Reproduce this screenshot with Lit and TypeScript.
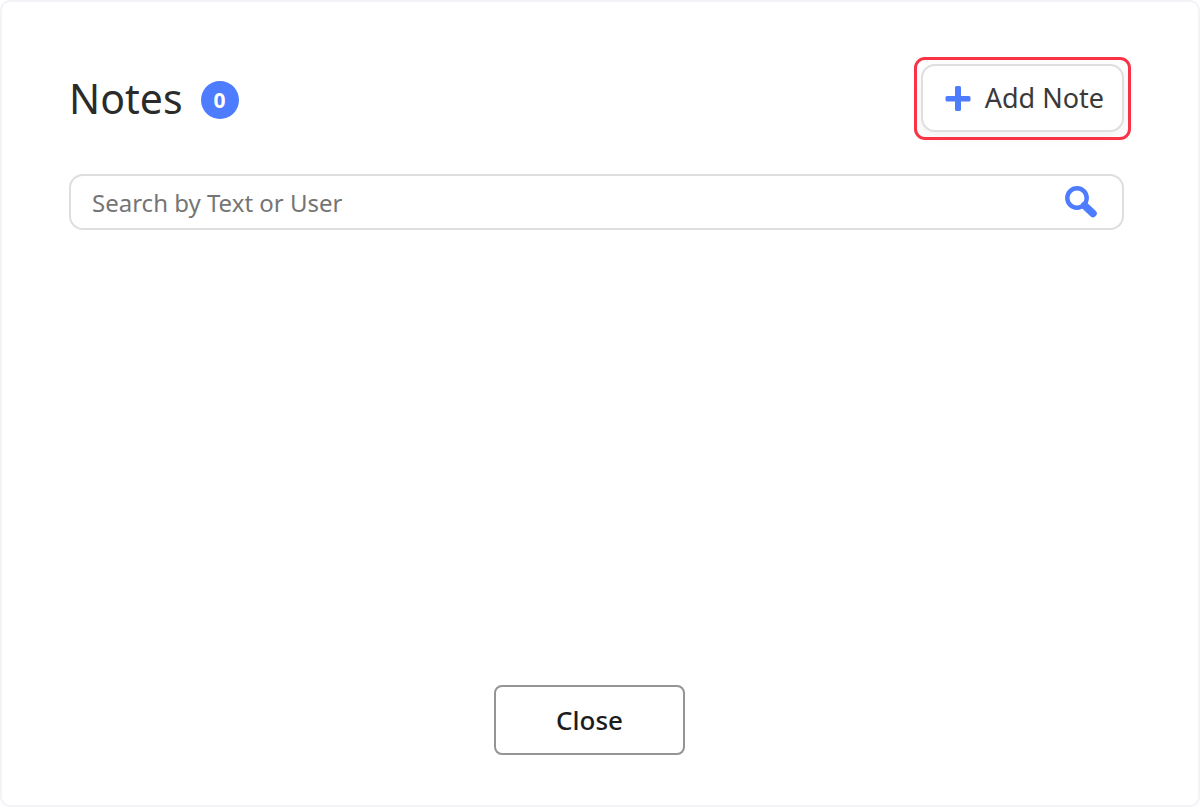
import { LitElement, html, css } from "lit";
import { customElement, property, state } from "lit/decorators.js";

@customElement("app-root")
export class AppRoot extends LitElement {
  @property({ type: Number }) count = 0;
  @state() private query = "";

  static styles = css`
    :host {
      display: block;
      font-family: "Noto Sans", "Open Sans", sans-serif;
      color: #2b2b2b;
    }
    * {
      box-sizing: border-box;
    }
    .panel {
      display: flex;
      flex-direction: column;
      min-height: 100vh;
      padding: 62px 74px 50px 67px;
      border: 2px solid #f2f2f7;
      border-radius: 10px;
      background: #fff;
    }
    .header {
      display: flex;
      align-items: center;
      justify-content: space-between;
      margin-bottom: 42px;
    }
    .heading {
      display: flex;
      align-items: center;
      gap: 18px;
    }
    h1 {
      margin: 0;
      font-size: 41px;
      line-height: 56px;
      font-weight: 400;
    }
    .badge {
      display: grid;
      place-items: center;
      width: 38px;
      height: 38px;
      margin-top: 4px;
      border-radius: 50%;
      background: #4d7cfe;
      color: #fff;
      font-size: 21px;
      line-height: 24px;
      font-weight: 700;
    }
    button {
      font-family: inherit;
      cursor: pointer;
      background: #fff;
    }
    .add {
      position: relative;
      display: flex;
      align-items: center;
      gap: 13px;
      height: 68px;
      padding: 0 18px 0 21px;
      border: 2px solid #dfdfdf;
      border-radius: 14px;
      color: #3a3a3a;
      font-size: 27px;
      line-height: 36px;
      box-shadow: 0 4px 14px rgba(0, 0, 0, 0.06);
    }
    .add::after {
      content: "";
      position: absolute;
      inset: -9px -9px -10px;
      border: 3px solid #fa3246;
      border-radius: 11px;
      pointer-events: none;
    }
    .add svg,
    .search svg {
      display: block;
      flex: none;
      fill: #4d7cfe;
    }
    .search {
      display: flex;
      align-items: center;
      height: 56px;
      padding: 0 24px 0 21px;
      border: 2px solid #dedede;
      border-radius: 14px;
    }
    .search input {
      flex: 1;
      min-width: 0;
      height: 40px;
      padding: 0;
      border: 0;
      outline: 0;
      background: none;
      font-family: inherit;
      font-size: 24px;
      color: #2b2b2b;
    }
    .search input::placeholder {
      color: #757575;
      opacity: 1;
    }
    .notes {
      flex: 1;
    }
    .footer {
      display: flex;
      justify-content: center;
      padding-right: 14px;
    }
    .close {
      width: 191px;
      height: 70px;
      border: 2px solid #949494;
      border-radius: 8px;
      color: #1c1c1c;
      font-size: 26px;
      line-height: 36px;
      font-weight: 500;
    }
  `;

  render() {
    return html`
      <main class="panel">
        <header class="header">
          <div class="heading">
            <h1>Notes</h1>
            <span class="badge">${this.count}</span>
          </div>
          <button class="add" type="button">
            <svg width="28" height="28" viewBox="0 0 28 28" aria-hidden="true">
              <path d="M12.500 2h3a1.500 1.500 0 0 1 1.500 1.500V12h8a1.500 1.500 0 0 1 1.500 1.500v2.500a1.500 1.500 0 0 1-1.500 1.500H17v8a1.500 1.500 0 0 1-1.500 1.500h-3A1.500 1.500 0 0 1 11 25.500v-8H3A1.500 1.500 0 0 1 1.500 16v-2.500A1.500 1.500 0 0 1 3 12h8V3.500A1.500 1.500 0 0 1 12.500 2z" />
            </svg>
            Add Note
          </button>
        </header>
        <div class="search">
          <input
            type="text"
            aria-label="Search by Text or User"
            placeholder="Search by Text or User"
            .value=${this.query}
            @input=${(e: Event) => (this.query = (e.target as HTMLInputElement).value)}
          />
          <svg width="34" height="34" viewBox="0 0 34 34" aria-hidden="true">
            <circle cx="13" cy="13" r="9.700" fill="none" stroke="#4d7cfe" stroke-width="4.400" />
            <path d="M20.500 20.500l8.500 8" fill="none" stroke="#4d7cfe" stroke-width="7.500" stroke-linecap="round" />
          </svg>
        </div>
        <section class="notes" aria-label="Notes list"></section>
        <footer class="footer">
          <button class="close" type="button">Close</button>
        </footer>
      </main>
    `;
  }
}
